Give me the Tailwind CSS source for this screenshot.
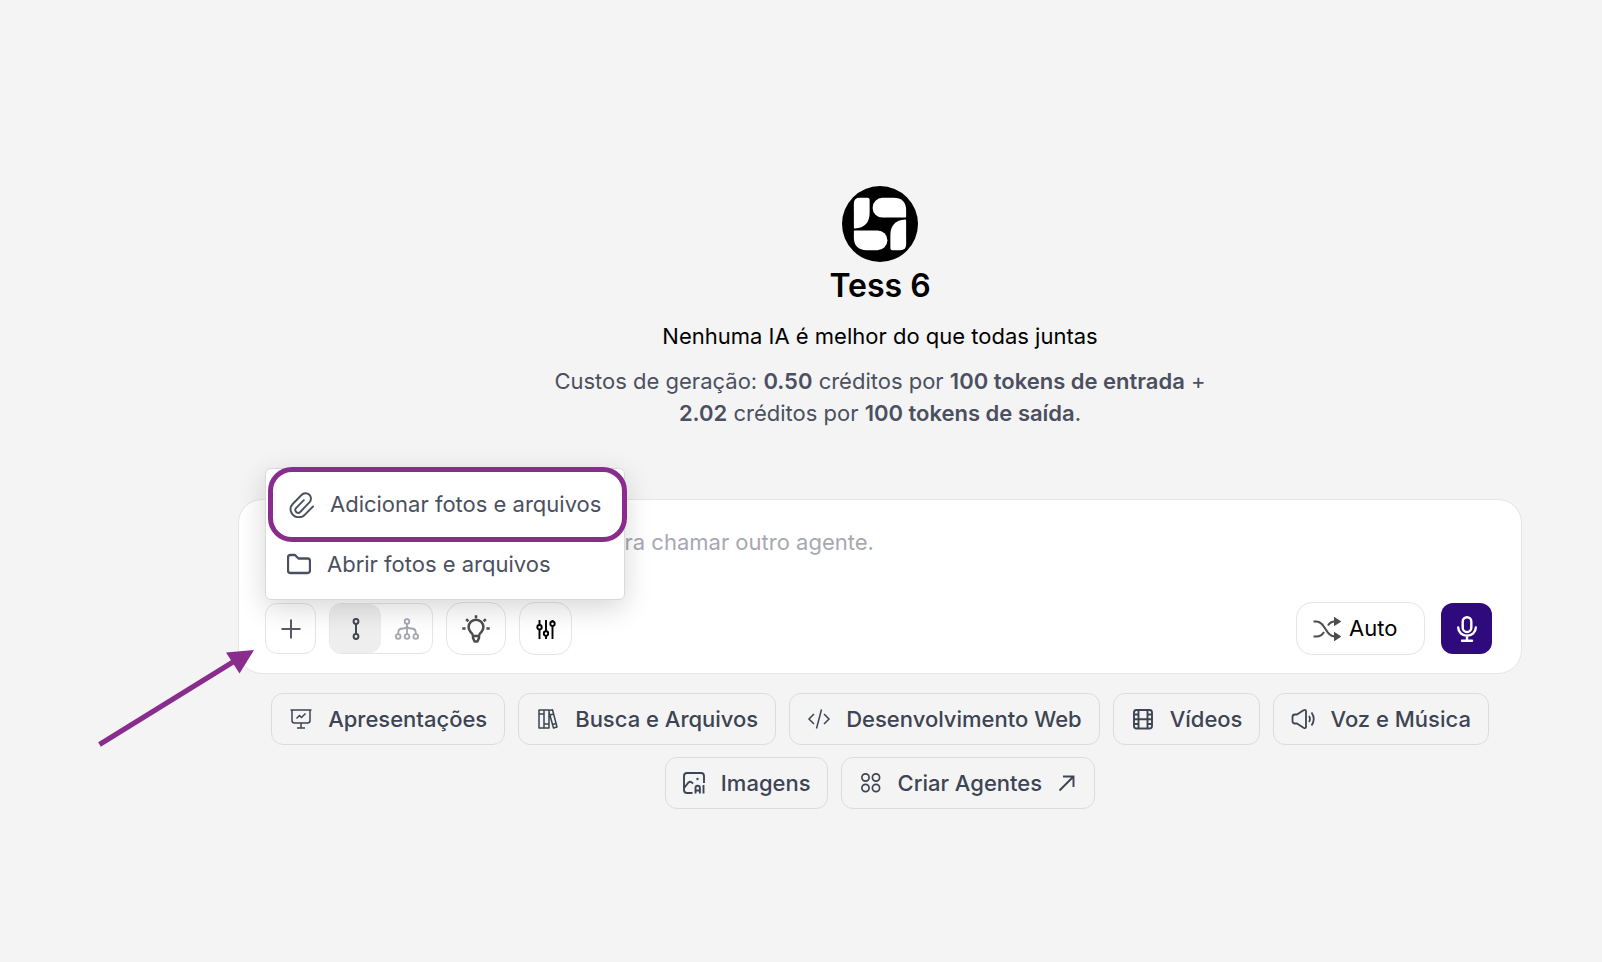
<!DOCTYPE html>
<html lang="pt-BR">
<head>
  <meta charset="UTF-8" />
  <meta name="viewport" content="width=device-width, initial-scale=1.0" />
  <script src="https://cdn.jsdelivr.net/npm/@tailwindcss/browser@4"></script>
  <title>Tess 6</title>
</head>

<body class="relative min-h-screen bg-[#f4f4f4] font-['Inter',sans-serif] text-[22px] text-black">
  <main class="pt-[186px] pr-20 pb-10 pl-[238px]">

    <!-- Agente -->
    <header class="flex flex-col items-center text-center">
      <svg class="size-[76px]" viewBox="0 0 77 77" aria-hidden="true">
        <circle cx="38.5" cy="38.5" r="38.5" fill="#000" />
        <g fill="#fff">
          <path d="M18 12h8q2 0 2 2v13q0 15-15 16-1 0-1-1V18q0-6 6-6z" />
          <path d="M41 12h11q13 0 13 13v6q0 1-1 1H41a10 10 0 0 1 0-20z" />
          <path d="M13 45h23a10 10 0 0 1 0 20H25q-13 0-13-13v-6q0-1 1-1z" />
          <path d="M64 34q1 0 1 1v24q0 6-6 6h-8q-2 0-2-2V50q0-15 15-16z" />
        </g>
      </svg>
      <h1 class="mt-1 text-[32px] leading-10 font-semibold">Tess 6</h1>
      <p class="mt-3.5 leading-8">Nenhuma IA é melhor do que todas juntas</p>
      <p class="mt-[13px] max-w-[700px] leading-8 text-[#4b5060]">Custos de geração: <b class="font-semibold">0.50</b> créditos por <b class="font-semibold">100 tokens de entrada</b> + <b class="font-semibold">2.02</b> créditos por <b class="font-semibold">100 tokens de saída</b>.</p>
    </header>

    <!-- Caixa de mensagem -->
    <form class="relative mt-[70px] rounded-3xl border border-[#e5e5e5] bg-white px-[26px] pt-6 pb-[18px]">
      <textarea aria-label="Mensagem" rows="1" placeholder="Digite sua mensagem ou use @ para chamar outro agente." class="block h-[78px] w-full resize-none leading-9 placeholder:text-[#a6a9b1] focus:outline-none"></textarea>

      <div class="flex items-center">
        <button type="button" aria-label="Adicionar" class="flex size-[51px] items-center justify-center rounded-xl border border-[#e5e5e5] text-[#565b68]">
          <svg class="size-6" viewBox="0 0 24 24" fill="none" stroke="currentColor" stroke-width="2"><path d="M12 2.500v19M2.500 12h19" /></svg>
        </button>

        <div class="ml-[13px] flex h-[51px] w-[104px] overflow-hidden rounded-xl border border-[#e5e5e5]">
          <button type="button" aria-label="Agente único" class="flex flex-1 items-center justify-center rounded-xl bg-[#eeeeee] text-[#414754]">
            <svg class="size-6" viewBox="0 0 24 24" fill="none" stroke="currentColor" stroke-width="2"><circle cx="12" cy="4.500" r="2.400" /><circle cx="12" cy="19.500" r="2.400" /><path d="M12 7v10" /></svg>
          </button>
          <button type="button" aria-label="Vários agentes" class="flex flex-1 items-center justify-center text-[#a4a7af]">
            <svg class="size-6" viewBox="0 0 24 24" fill="none" stroke="currentColor" stroke-width="1.800"><circle cx="12" cy="4.500" r="2.300" /><circle cx="3.200" cy="19.500" r="2.300" /><circle cx="12" cy="19.500" r="2.300" /><circle cx="20.800" cy="19.500" r="2.300" /><path d="M12 7v10M3.200 17v-1q0-4.500 4.500-4.500 4.300 0 4.300-3 0 3 4.300 3 4.500 0 4.500 4.500v1" /></svg>
          </button>
        </div>

        <button type="button" aria-label="Raciocínio" class="ml-[13px] flex h-[53px] w-[60px] items-center justify-center rounded-2xl border border-[#e5e5e5] text-[#4d4d4d]">
          <svg class="size-[28px]" viewBox="0 0 28 28" fill="none" stroke="currentColor" stroke-width="2.500"><path d="M11 21q0-2-2.200-3.700a7.400 7.400 0 1 1 10.400 0q-2.200 1.700-2.200 3.700zM11 21v2l1.600 3.500h2.800l1.600-3.500v-2" stroke-linejoin="round" /><path d="M14 .300v3M4.200 4.200l2.200 2.200M23.800 4.200l-2.200 2.200M.300 13.500h3.200M24.500 13.500h3.200" /></svg>
        </button>

        <button type="button" aria-label="Ajustes" class="ml-[13px] flex size-[53px] items-center justify-center rounded-2xl border border-[#e5e5e5]">
          <svg class="size-5" viewBox="0 0 20 20" fill="none" stroke="currentColor" stroke-width="1.900"><circle cx="3.500" cy="8.200" r="2.200" /><circle cx="10" cy="14.500" r="2.200" /><circle cx="16.500" cy="4.700" r="2.200" /><path d="M3.500 1v5M3.500 10.500V20M10 1v11.300M10 16.700V20M16.500 1v1.500M16.500 7v13" /></svg>
        </button>

        <button type="button" class="ml-auto flex h-[53px] w-[129px] items-center gap-2 rounded-2xl border border-[#e5e5e5] pl-4">
          <svg class="h-6 w-7 text-[#4d4d4d]" viewBox="0 0 28 24" fill="none" stroke="currentColor" stroke-width="2"><path d="M.500 4.500h3c9 0 9 15 18 15h1.500M.500 19.500h3q5 0 7.500-4.500M15 8.500q2.500-4 6.500-4H23" /><path d="M22 1.500l4.500 3-4.500 3zM22 16.500l4.500 3-4.500 3z" fill="currentColor" /></svg>
          Auto
        </button>

        <button type="button" aria-label="Gravar áudio" class="mr-[3px] ml-4 flex size-[51px] items-center justify-center rounded-xl bg-[#2e0a7c] text-white">
          <svg class="h-[26px] w-5" viewBox="0 0 20 26" fill="none" stroke="currentColor" stroke-width="2.400" stroke-linecap="round"><rect x="5.700" y="1.200" width="8.600" height="14.800" rx="4.300" /><path d="M1.200 11.500a8.800 8.200 0 0 0 17.600 0M10 20v4.500M5 24.800h10" /></svg>
        </button>
      </div>

      <!-- Menu de anexos -->
      <div class="absolute -top-8 left-[26px] w-[360px] rounded-md border border-[#d9d9dc] bg-white pb-[13px] text-[#4b5060] shadow-[0_8px_28px_rgba(0,0,0,0.16)]">
        <button type="button" class="-mt-0.5 -mr-1 ml-0.5 flex h-[75px] w-[359px] items-center gap-4 rounded-3xl border-[5px] border-[#892c8e] bg-white pl-[15px]">
          <svg class="size-[26px]" viewBox="0 0 26 26" fill="none" stroke="currentColor" stroke-width="1.900" stroke-linecap="round"><path d="M25 14.500l-7.800 7.800a8.200 8.200 0 0 1-13.800-1.800c-1.500-3-.800-6.300 1.300-8.500l8.800-9a5.400 5.400 0 0 1 8.100 7.200L12.200 20c-2.800 2.500-6.400-1.200-4.200-3.800l7.800-8" /></svg>
          Adicionar fotos e arquivos
        </button>
        <button type="button" class="flex h-11 w-full items-center gap-4 pl-[21px]">
          <svg class="size-6" viewBox="0 0 24 24" fill="none" stroke="currentColor" stroke-width="2.300" stroke-linejoin="round"><path d="M3.500 3H8l3.500 3.500h9Q23 6.500 23 9v9.500q0 2.500-2.500 2.500h-17Q1 21 1 18.500v-13Q1 3 3.500 3z" /></svg>
          Abrir fotos e arquivos
        </button>
      </div>
    </form>

    <!-- Sugestões -->
    <nav class="mt-[19px] flex flex-wrap justify-center gap-x-[13px] gap-y-3 font-medium text-[#3d4453]">
      <button type="button" class="flex h-[52px] items-center gap-[15px] rounded-xl border border-[#dcdcdc] px-[17px]">
        <svg class="size-6" viewBox="0 0 24 24" fill="none" stroke="currentColor" stroke-width="1.500"><path d="M1.500 3h21M3 3v10.500Q3 16 5.500 16h13q2.500 0 2.500-2.500V3M12 16v5M8 21h8M7.500 11.500l3-3 2 2 4-4" /></svg>
        Apresentações
      </button>
      <button type="button" class="flex h-[52px] items-center gap-[15px] rounded-xl border border-[#dcdcdc] px-[17px]">
        <svg class="size-6" viewBox="0 0 24 24" fill="none" stroke="currentColor" stroke-width="1.500" stroke-linejoin="round"><path d="M3 3h5v18H3zM8 3h5v18H8zM3 7h5M8 17h5M13 3.500l3.500-.700L21 20l-3.500 1L13 5M14 8l3.800-1M16.500 17.500l3.800-1" /></svg>
        Busca e Arquivos
      </button>
      <button type="button" class="flex h-[52px] items-center gap-[15px] rounded-xl border border-[#dcdcdc] px-[17px]">
        <svg class="size-6" viewBox="0 0 24 24" fill="none" stroke="currentColor" stroke-width="1.500"><path d="M7 7l-5 5 5 5M17 7l5 5-5 5M14.500 2.500l-5 19" /></svg>
        Desenvolvimento Web
      </button>
      <button type="button" class="flex h-[52px] items-center gap-[15px] rounded-xl border border-[#dcdcdc] px-[17px]">
        <svg class="size-6" viewBox="0 0 24 24" fill="none" stroke="currentColor" stroke-width="1.900"><rect x="3" y="3" width="18" height="18.500" rx="2.500" /><path d="M7.500 3v18.500M16.500 3v18.500M7.500 12.200h9M3 7.500h4.500M3 12.200h4.500M3 17h4.500M16.500 7.500H21M16.500 12.200H21M16.500 17H21" /></svg>
        Vídeos
      </button>
      <button type="button" class="flex h-[52px] items-center gap-[15px] rounded-xl border border-[#dcdcdc] px-[17px]">
        <svg class="size-6" viewBox="0 0 24 24" fill="none" stroke="currentColor" stroke-width="1.800" stroke-linejoin="round"><path d="M4 7.500h2L12.500 3.300Q15 2 15 4.500v15q0 2.500-2.500 1.200L6 16.500H4Q1.500 16.500 1.500 14v-4Q1.500 7.500 4 7.500zM18 9q2 3 0 6M20.500 5.500q4.500 6.500 0 13" /></svg>
        Voz e Música
      </button>
      <button type="button" class="flex h-[52px] items-center gap-[15px] rounded-xl border border-[#dcdcdc] px-4">
        <svg class="size-6" viewBox="0 0 24 24" fill="none" stroke="currentColor" stroke-width="1.900"><path d="M10.500 22H5q-3 0-3-3V5q0-3 3-3h14q3 0 3 3v7M2.500 16.500l4-5q2.200-1.800 4.500 1.200M13.500 22.500V17q0-2.200 2.200-2.200t2.200 2.200v5.500M13.500 19.500H18M21.500 14v8.500" /><circle cx="15.500" cy="8" r="1.200" fill="currentColor" stroke="none" /></svg>
        Imagens
      </button>
      <button type="button" class="flex h-[52px] items-center gap-[15px] rounded-xl border border-[#dcdcdc] px-[17px]">
        <svg class="size-6" viewBox="0 0 24 24" fill="none" stroke="currentColor" stroke-width="1.700"><circle cx="6.500" cy="6.500" r="3.600" /><circle cx="17" cy="6.500" r="3.600" /><circle cx="6.500" cy="17" r="3.600" /><circle cx="17" cy="17" r="3.600" /></svg>
        Criar Agentes
        <svg class="size-5" viewBox="0 0 20 20" fill="none" stroke="currentColor" stroke-width="1.900"><path d="M2.500 17.500L16.500 3.500M6 3.500h10.500V14" /></svg>
      </button>
    </nav>
  </main>

  <!-- Seta -->
  <svg class="absolute top-[648px] left-[96px] h-[100px] w-[160px]" viewBox="0 0 160 100" aria-hidden="true">
    <path d="M3.500 96.500L137 14" stroke="#892c8e" stroke-width="5" />
    <path d="M158 2L130 4.500 143.500 25.500z" fill="#892c8e" />
  </svg>
</body>
</html>
